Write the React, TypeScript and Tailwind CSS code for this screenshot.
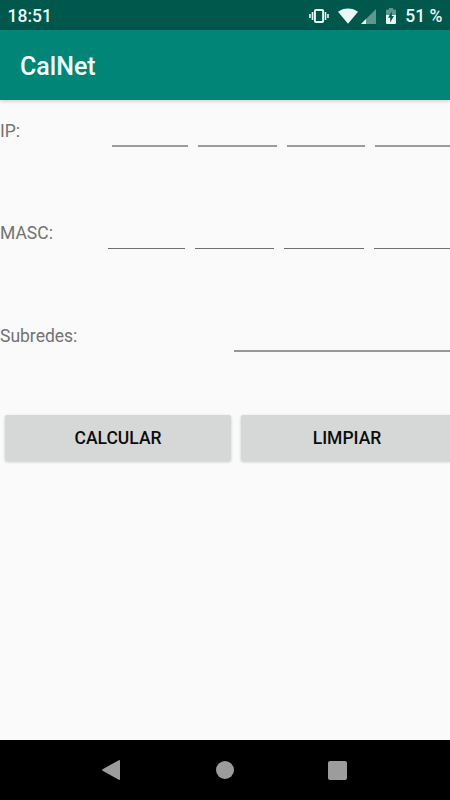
import { useState } from 'react';
import clsx from 'clsx';

const ipWidths = ['w-[76px]', 'w-[79px]', 'w-[78px]', 'w-[75px]'];
const maskWidths = ['w-[77px]', 'w-[79px]', 'w-[80px]', 'w-[76px]'];

const StatusBar = () => (
  <header className="flex h-[30px] shrink-0 items-center justify-between bg-[#00574b] pr-[7.5px] pl-[7.5px] text-[17.5px] font-medium text-[#e9f8f5]">
    <span className="pt-0.5">18:51</span>
    <div className="flex items-center pt-0.5">
      <svg width="20" height="14" viewBox="0 0 20 14" fill="none" stroke="currentColor">
        <rect x="5.9" y="1" width="8.2" height="12" rx="1" strokeWidth="2" />
        <path d="M3.5 3v8M1 5v4M16.5 3v8M19 5v4" strokeWidth="1.6" />
      </svg>
      <svg className="ml-[9px]" width="20" height="16" viewBox="0 0 20 16" fill="currentColor">
        <path d="M0 3.8C2.8 1.6 6.2.4 10 .4s7.2 1.2 10 3.4L10 15.8z" />
      </svg>
      <svg className="ml-[3px]" width="15" height="15" viewBox="0 0 15 15" fill="currentColor">
        <path d="M15 0v15H0z" opacity=".4" />
        <path d="M5 10v5H0z" />
      </svg>
      <svg className="ml-[10px]" width="10" height="16" viewBox="0 0 10 16" fill="currentColor">
        <path d="M3 0h4v1.6h2q1 0 1 1V7H0V2.6q0-1 1-1h2z" opacity=".4" />
        <path d="M0 7h10v8q0 1-1 1H1q-1 0-1-1z" />
        <path d="M5.8 3.6v4.5h2.1l-3.7 6.3V9.8H2z" fill="#00574b" />
      </svg>
      <span className="ml-[9.5px]">51 %</span>
    </div>
  </header>
);

type OctetRowProps = {
  label: string;
  widths: string[];
  className?: string;
  labelClass: string;
  lineClass: string;
};

const OctetRow = ({ label, widths, className, labelClass, lineClass }: OctetRowProps) => {
  const [octets, setOctets] = useState(['', '', '', '']);

  return (
    <div className={clsx('flex shrink-0 items-start justify-between', className)}>
      <span className={clsx('leading-[21px]', labelClass)}>{label}</span>
      <div className="flex gap-[10px]">
        {widths.map((width, index) => (
          <input
            key={index}
            aria-label={`${label} ${index + 1}`}
            value={octets[index]}
            onChange={(e) => setOctets(octets.map((o, i) => (i === index ? e.target.value : o)))}
            className={clsx('outline-none', width, lineClass)}
          />
        ))}
      </div>
    </div>
  );
};

const App = () => {
  const [subnets, setSubnets] = useState('');

  return (
    <div className="flex h-screen w-full flex-col overflow-hidden bg-[#fafafa] font-[Roboto,sans-serif]">
      <StatusBar />
      <div className="flex h-[70px] shrink-0 items-center bg-[#008577] pl-5 shadow-[0_1px_4px_rgba(0,0,0,0.2)]">
        <h1 className="pt-1 text-[25px] font-medium text-[#effffc]">CalNet</h1>
      </div>

      <main className="flex flex-1 flex-col text-[17.5px] text-[#737373]">
        <OctetRow
          label="IP:"
          widths={ipWidths}
          className="h-[103px]"
          labelClass="mt-[21px]"
          lineClass="h-[47px] border-b-2 border-[#9c9c9c]"
        />
        <OctetRow
          label="MASC:"
          widths={maskWidths}
          className="h-[102px]"
          labelClass="mt-5"
          lineClass="h-[46px] border-b border-[#707070]"
        />
        <div className="flex h-[110px] shrink-0 items-start justify-between">
          <span className="mt-[21px] leading-[21px]">Subredes:</span>
          <input
            aria-label="Subredes"
            value={subnets}
            onChange={(e) => setSubnets(e.target.value)}
            className="h-[47px] w-[216px] border-b-2 border-[#989898] outline-none"
          />
        </div>
        <div className="-mr-[3px] flex shrink-0 gap-[10px] pl-[5px] font-medium text-[#0c0c0c]">
          <button className="h-[46px] w-[226px] rounded-[2px] bg-[#d6d8d7] shadow-[0_1px_3px_rgba(0,0,0,0.2)]">
            CALCULAR
          </button>
          <button className="h-[46px] flex-1 rounded-[2px] bg-[#d6d8d7] shadow-[0_1px_3px_rgba(0,0,0,0.2)]">
            LIMPIAR
          </button>
        </div>
      </main>

      <nav className="flex h-[60px] shrink-0 items-center justify-between bg-black pr-[103px] pl-[102px] text-[#9c9c9c]">
        <svg width="18" height="20" viewBox="0 0 18 20" fill="currentColor">
          <path d="M16.8.2Q18-.3 18 1v18q0 1.3-1.2.8L.6 10.8q-.8-.8 0-1.6z" />
        </svg>
        <span className="ml-0.5 size-[18px] rounded-full bg-current" />
        <span className="size-[19px] rounded-[2px] bg-current" />
      </nav>
    </div>
  );
};

export default App;
